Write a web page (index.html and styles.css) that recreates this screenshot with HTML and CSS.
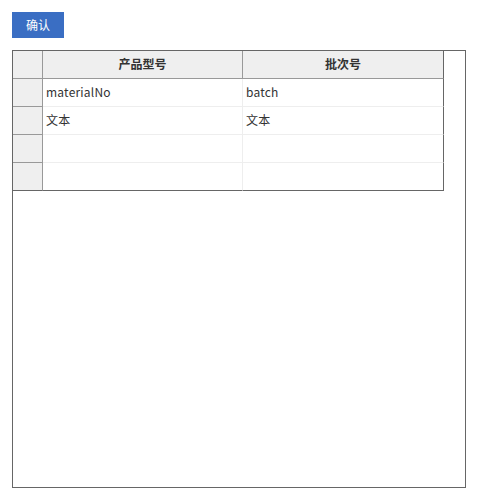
FILE: index.html
```html
<!DOCTYPE html>
<html>
<head>
<meta charset="utf-8">
<link rel="stylesheet" href="styles.css">
</head>
<body>
<div class="page">
  <button class="btn">确认</button>
  <div class="panel">
    <div class="grid">
      <div class="cell corner"></div>
      <div class="cell head">产品型号</div>
      <div class="cell head last">批次号</div>

      <div class="cell rowhead"></div>
      <div class="cell data">materialNo</div>
      <div class="cell data last">batch</div>

      <div class="cell rowhead"></div>
      <div class="cell data">文本</div>
      <div class="cell data last">文本</div>

      <div class="cell rowhead"></div>
      <div class="cell data"></div>
      <div class="cell data last"></div>

      <div class="cell rowhead bottom"></div>
      <div class="cell data bottom"></div>
      <div class="cell data last bottom"></div>
    </div>
  </div>
</div>
</body>
</html>
```
FILE: styles.css
```css
* { box-sizing: border-box; }
html, body { margin: 0; padding: 0; background: #fff; }
body {
  font-family: "Noto Sans CJK SC", "Noto Sans", sans-serif;
  font-size: 12px;
  color: #333;
}
.page {
  padding: 12px;
  display: flex;
  flex-direction: column;
  align-items: flex-start;
  gap: 12px;
}
.btn {
  width: 52px;
  height: 26px;
  border: none;
  margin: 0;
  padding: 0 0 1px;
  background: #3a6ec3;
  color: #fff;
  font-family: "Noto Sans CJK SC", sans-serif;
  font-size: 12px;
}
.panel {
  width: 454px;
  height: 438px;
  border: 1px solid #666;
}
.grid {
  display: grid;
  grid-template-columns: 30px 200px 201px;
  grid-auto-rows: 28px;
}
.cell {
  border-right: 1px solid #eee;
  border-bottom: 1px solid #eee;
  display: flex;
  align-items: center;
  line-height: 1;
  padding-bottom: 1px;
}
.corner, .rowhead {
  background: #efefef;
  border-right-color: #999;
  border-bottom-color: #999;
}
.head {
  background: #efefef;
  border-right-color: #999;
  border-bottom-color: #999;
  justify-content: center;
  font-weight: bold;
}
.data {
  padding-left: 3px;
  letter-spacing: 0.2px;
}
.last { border-right-color: #666; }
.bottom { border-bottom-color: #666; }
```
